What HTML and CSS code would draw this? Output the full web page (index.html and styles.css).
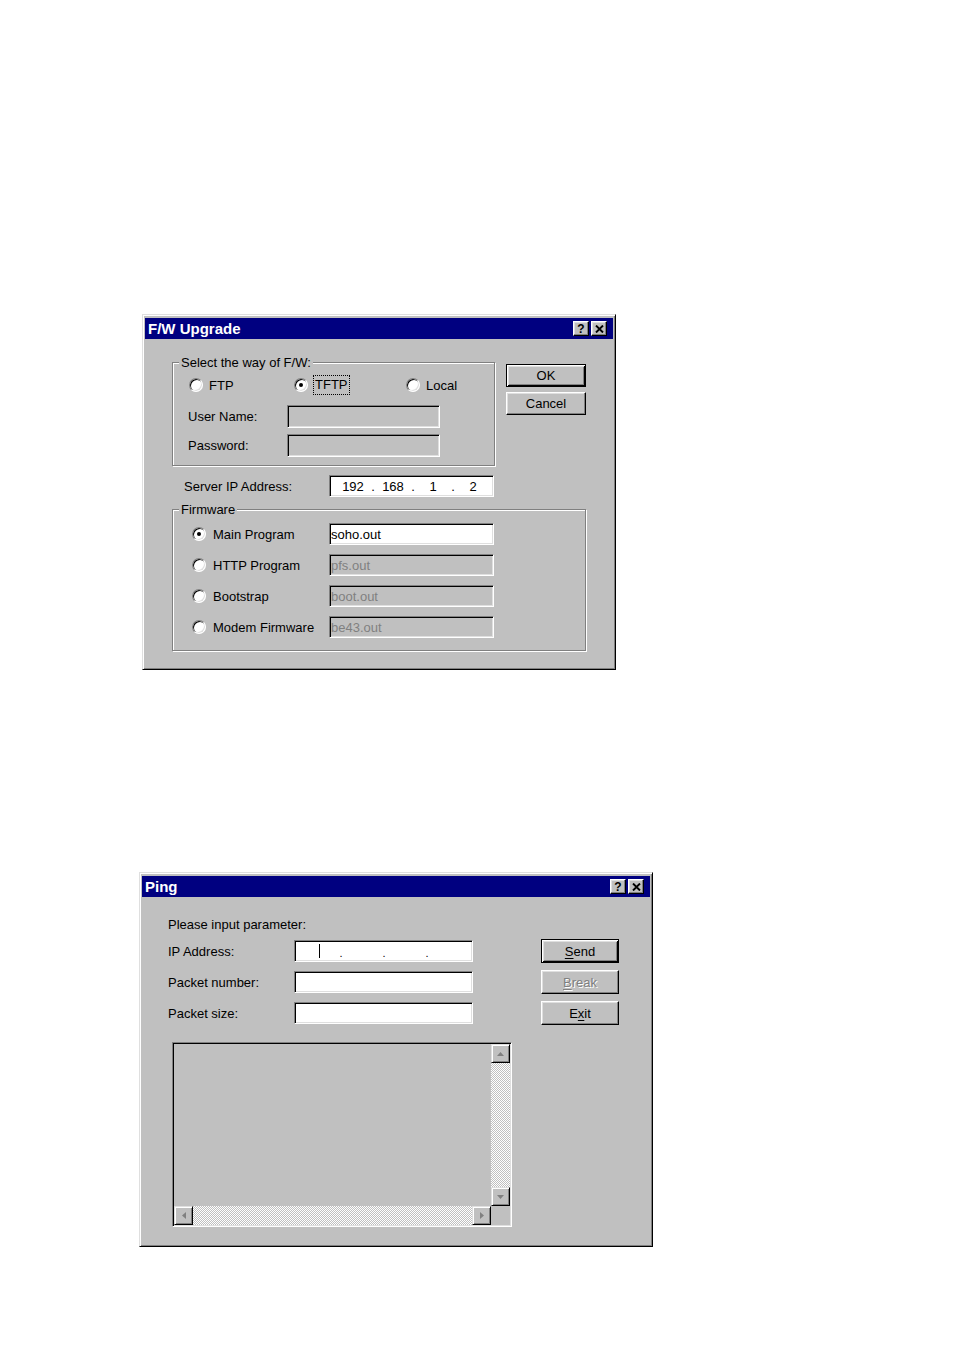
FILE: index.html
```html
<!DOCTYPE html>
<html>
<head>
<meta charset="utf-8">
<title>F/W Upgrade and Ping</title>
<link rel="stylesheet" href="styles.css">
</head>
<body>
<div class="page">

  <div class="window fw">
    <div class="titlebar">
      <span class="title">F/W Upgrade</span>
      <div class="caption-btns">
        <span class="cbtn help">?</span>
        <span class="cbtn close"><svg width="9" height="8" viewBox="0 0 9 8"><path d="M1 0.5L8 7.5M8 0.5L1 7.5" stroke="#000" stroke-width="1.9" fill="none"/></svg></span>
      </div>
    </div>
    <div class="fw-body">
      <div class="fw-top">
        <fieldset class="group way">
          <legend>Select the way of F/W:</legend>
          <div class="radio-row">
            <div class="opt opt-ftp"><span class="radio"></span><span>FTP</span></div>
            <div class="opt opt-tftp"><span class="radio checked"></span><span class="focus">TFTP</span></div>
            <div class="opt"><span class="radio"></span><span>Local</span></div>
          </div>
          <div class="field-grid">
            <span class="lbl">User Name:</span><span class="edit tall disabled"></span>
            <span class="lbl">Password:</span><span class="edit tall disabled"></span>
          </div>
        </fieldset>
        <div class="btn-col">
          <div class="btn default fwbtn">OK</div>
          <div class="btn fwbtn">Cancel</div>
        </div>
      </div>
      <div class="server-row">
        <span class="server-lbl">Server IP Address:</span>
        <span class="edit ip fw-ip">
          <span class="oct">192</span><span class="dot">.</span><span class="oct">168</span><span class="dot">.</span><span class="oct">1</span><span class="dot">.</span><span class="oct">2</span>
        </span>
      </div>
      <fieldset class="group firmware">
        <legend>Firmware</legend>
        <div class="fw-grid">
          <span class="radio checked"></span><span class="lbl">Main Program</span><span class="edit">soho.out</span>
          <span class="radio"></span><span class="lbl">HTTP Program</span><span class="edit disabled">pfs.out</span>
          <span class="radio"></span><span class="lbl">Bootstrap</span><span class="edit disabled">boot.out</span>
          <span class="radio"></span><span class="lbl">Modem Firmware</span><span class="edit disabled">be43.out</span>
        </div>
      </fieldset>
    </div>
  </div>

  <div class="window ping">
    <div class="titlebar">
      <span class="title">Ping</span>
      <div class="caption-btns">
        <span class="cbtn help">?</span>
        <span class="cbtn close"><svg width="9" height="8" viewBox="0 0 9 8"><path d="M1 0.5L8 7.5M8 0.5L1 7.5" stroke="#000" stroke-width="1.9" fill="none"/></svg></span>
      </div>
    </div>
    <div class="ping-body">
      <span class="prompt">Please input parameter:</span>

      <span class="lbl r2">IP Address:</span>
      <span class="edit ip ping-ip r2">
        <span class="oct2"><span class="caret"></span></span><span class="dot2">.</span><span class="oct2"></span><span class="dot2">.</span><span class="oct2"></span><span class="dot2">.</span><span class="oct2"></span>
      </span>
      <div class="btn default pbtn r2"><span><u>S</u>end</span></div>

      <span class="lbl r3">Packet number:</span>
      <span class="edit r3"></span>
      <div class="btn pbtn disabled-btn r3"><span><u>B</u>reak</span></div>

      <span class="lbl r4">Packet size:</span>
      <span class="edit r4"></span>
      <div class="btn pbtn r4"><span>E<u>x</u>it</span></div>

      <div class="listbox">
        <div class="list-area"></div>
        <div class="vscroll">
          <div class="sbtn"><svg width="7" height="4" viewBox="0 0 7 4"><path d="M3.5 0L7 4H0z" fill="#808080"/></svg></div>
          <div class="track"></div>
          <div class="sbtn"><svg width="7" height="4" viewBox="0 0 7 4"><path d="M0 0H7L3.5 4z" fill="#808080"/></svg></div>
        </div>
        <div class="hscroll">
          <div class="sbtn"><svg width="4" height="7" viewBox="0 0 4 7"><path d="M0 3.5L4 0V7z" fill="#808080"/></svg></div>
          <div class="track"></div>
          <div class="sbtn"><svg width="4" height="7" viewBox="0 0 4 7"><path d="M0 0L4 3.5L0 7z" fill="#808080"/></svg></div>
        </div>
        <div class="corner"></div>
      </div>
    </div>
  </div>

</div>
</body>
</html>
```

FILE: styles.css
```css
* { box-sizing: border-box; }

body {
  margin: 0;
  background: #fff;
  color: #000;
  font: 13px/15px "Liberation Sans", Arial, sans-serif;
}

.page {
  display: flex;
  flex-direction: column;
  align-items: flex-start;
  padding-top: 314px;
}

/* ---------- window frame ---------- */
.window {
  background: #c0c0c0;
  border: 1px solid;
  border-color: #dfdfdf #000 #000 #dfdfdf;
  box-shadow: inset 1px 1px 0 #fff, inset -1px -1px 0 #808080;
  padding: 3px 2px 2px 2px;
  display: flex;
  flex-direction: column;
}

.fw {
  margin-left: 142px;
  width: 474px;
  height: 356px;
}

.ping {
  margin-left: 139px;
  margin-top: 202px;
  width: 514px;
  height: 375px;
}

.titlebar {
  height: 21px;
  flex: none;
  background: #000080;
  color: #fff;
  display: flex;
  align-items: center;
  justify-content: space-between;
  padding: 0 6px 0 3px;
}

.title {
  font: bold 15px/21px "Liberation Sans", Arial, sans-serif;
}

.caption-btns {
  display: flex;
  gap: 2px;
}

.cbtn {
  width: 16px;
  height: 15px;
  background: #c0c0c0;
  border: 1px solid;
  border-color: #fff #000 #000 #fff;
  box-shadow: inset -1px -1px 0 #808080, inset 1px 1px 0 #dfdfdf;
  display: grid;
  place-items: center;
  color: #000;
  font: bold 12px/1 "Liberation Sans", Arial, sans-serif;
}

/* ---------- common controls ---------- */
.group {
  margin: 0;
  padding-left: 0;
  padding-right: 0;
  border: 1px solid #808080;
  box-shadow: 1px 1px 0 #fff, inset 1px 1px 0 #fff;
  min-width: 0;
}

.group legend {
  margin-left: 6px;
  padding: 0 2px;
  line-height: 15px;
  background: #c0c0c0;
}

.radio {
  width: 14px;
  height: 14px;
  border-radius: 50%;
  background: #fff;
  border: 1px solid;
  border-color: #808080 #fff #fff #808080;
  box-shadow: inset 1px 1px 0 #000, inset -1px -1px 0 #dfdfdf;
  display: inline-grid;
  place-items: center;
  flex: none;
}

.radio.checked::after {
  content: "";
  width: 4px;
  height: 4px;
  border-radius: 50%;
  background: #000;
}

.edit {
  height: 22px;
  background: #fff;
  border: 1px solid;
  border-color: #808080 #fff #fff #808080;
  box-shadow: inset 1px 1px 0 #000, inset -1px -1px 0 #dfdfdf;
  padding: 0 2px 0 1px;
  display: flex;
  align-items: center;
  white-space: nowrap;
}

.edit.tall { height: 23px; }

.edit.disabled {
  background: #c0c0c0;
  color: #808080;
}

.btn {
  display: flex;
  align-items: center;
  justify-content: center;
  background: #c0c0c0;
  border: 1px solid;
  border-color: #fff #000 #000 #fff;
  box-shadow: inset -1px -1px 0 #808080, inset 1px 1px 0 #dfdfdf;
}

.btn.default {
  border-color: #000;
  box-shadow: inset 1px 1px 0 #fff, inset -1px -1px 0 #000, inset 2px 2px 0 #dfdfdf, inset -2px -2px 0 #808080;
}

.btn u { text-decoration-thickness: 1px; text-underline-offset: 2px; }

.disabled-btn {
  color: #808080;
  text-shadow: 1px 1px 0 #fff;
}

/* ---------- F/W Upgrade ---------- */
.fw-body {
  display: flex;
  flex-direction: column;
  align-items: flex-start;
  padding-left: 27px;
}

.fw-top {
  display: flex;
  align-items: flex-start;
  margin-top: 16px;
}

.way {
  width: 323px;
  padding-top: 5px;
  padding-bottom: 8px;
}

.radio-row {
  display: flex;
  align-items: center;
  height: 20px;
  margin-left: 16px;
}

.opt {
  display: flex;
  align-items: center;
  gap: 6px;
}

.opt-ftp { width: 105px; }
.opt-tftp { width: 112px; }

.focus {
  border: 1px dotted #000;
  padding: 1px 1px 2px 1px;
  margin-left: -1px;
}

.field-grid {
  display: grid;
  grid-template-columns: 99px 153px;
  row-gap: 6px;
  align-items: center;
  margin-top: 10px;
  margin-left: 15px;
}

.btn-col {
  display: flex;
  flex-direction: column;
  gap: 5px;
  margin-left: 11px;
  margin-top: 9px;
}

.fwbtn {
  width: 80px;
  height: 23px;
}

.server-row {
  display: flex;
  align-items: center;
  margin-top: 9px;
  padding-left: 12px;
}

.server-lbl { width: 145px; }

.fw-ip {
  width: 165px;
  padding-left: 8px;
}

.oct { width: 30px; text-align: center; }
.dot { width: 10px; text-align: center; }

.firmware {
  width: 414px;
  margin-top: 5px;
  padding-top: 6px;
  padding-bottom: 12px;
}

.fw-grid {
  display: grid;
  grid-template-columns: 14px 109px 165px;
  grid-auto-rows: 22px;
  column-gap: 7px;
  row-gap: 9px;
  align-items: center;
  margin-left: 19px;
}

/* ---------- Ping ---------- */
.ping-body {
  display: grid;
  grid-template-columns: 126px 179px 68px 78px;
  grid-template-rows: 16px 24px 24px 24px auto;
  row-gap: 7px;
  align-items: center;
  padding: 19px 0 0 26px;
}

.prompt { grid-column: 1 / 4; grid-row: 1; }

.r2 { grid-row: 2; }
.r3 { grid-row: 3; }
.r4 { grid-row: 4; }

.ping-body .edit { grid-column: 2; }
.ping-body .pbtn { grid-column: 4; height: 24px; }

.ping-ip { padding-left: 8px; }

.oct2 {
  width: 33px;
  display: flex;
  justify-content: center;
}

.dot2 {
  width: 10px;
  text-align: center;
  font-size: 11px;
  padding-top: 4px;
}

.caret {
  width: 1px;
  height: 14px;
  background: #000;
}

.listbox {
  grid-column: 1 / 5;
  grid-row: 5;
  justify-self: start;
  margin: 10px 0 0 4px;
  width: 340px;
  height: 185px;
  border: 1px solid;
  border-color: #808080 #fff #fff #808080;
  box-shadow: inset 1px 1px 0 #000, inset -1px -1px 0 #dfdfdf;
  padding: 1px;
  background: #c0c0c0;
  display: grid;
  grid-template-columns: 1fr 19px;
  grid-template-rows: 1fr 19px;
}

.vscroll {
  display: flex;
  flex-direction: column;
}

.hscroll {
  display: flex;
}

.track {
  flex: 1;
  background: repeating-conic-gradient(#fff 0 25%, #c0c0c0 0 50%) 0 0 / 2px 2px;
}

.sbtn {
  width: 19px;
  height: 19px;
  flex: none;
  display: grid;
  place-items: center;
  background: #c0c0c0;
  border: 1px solid;
  border-color: #dfdfdf #000 #000 #dfdfdf;
  box-shadow: inset 1px 1px 0 #fff, inset -1px -1px 0 #808080;
}

.corner { background: #c0c0c0; }
```
